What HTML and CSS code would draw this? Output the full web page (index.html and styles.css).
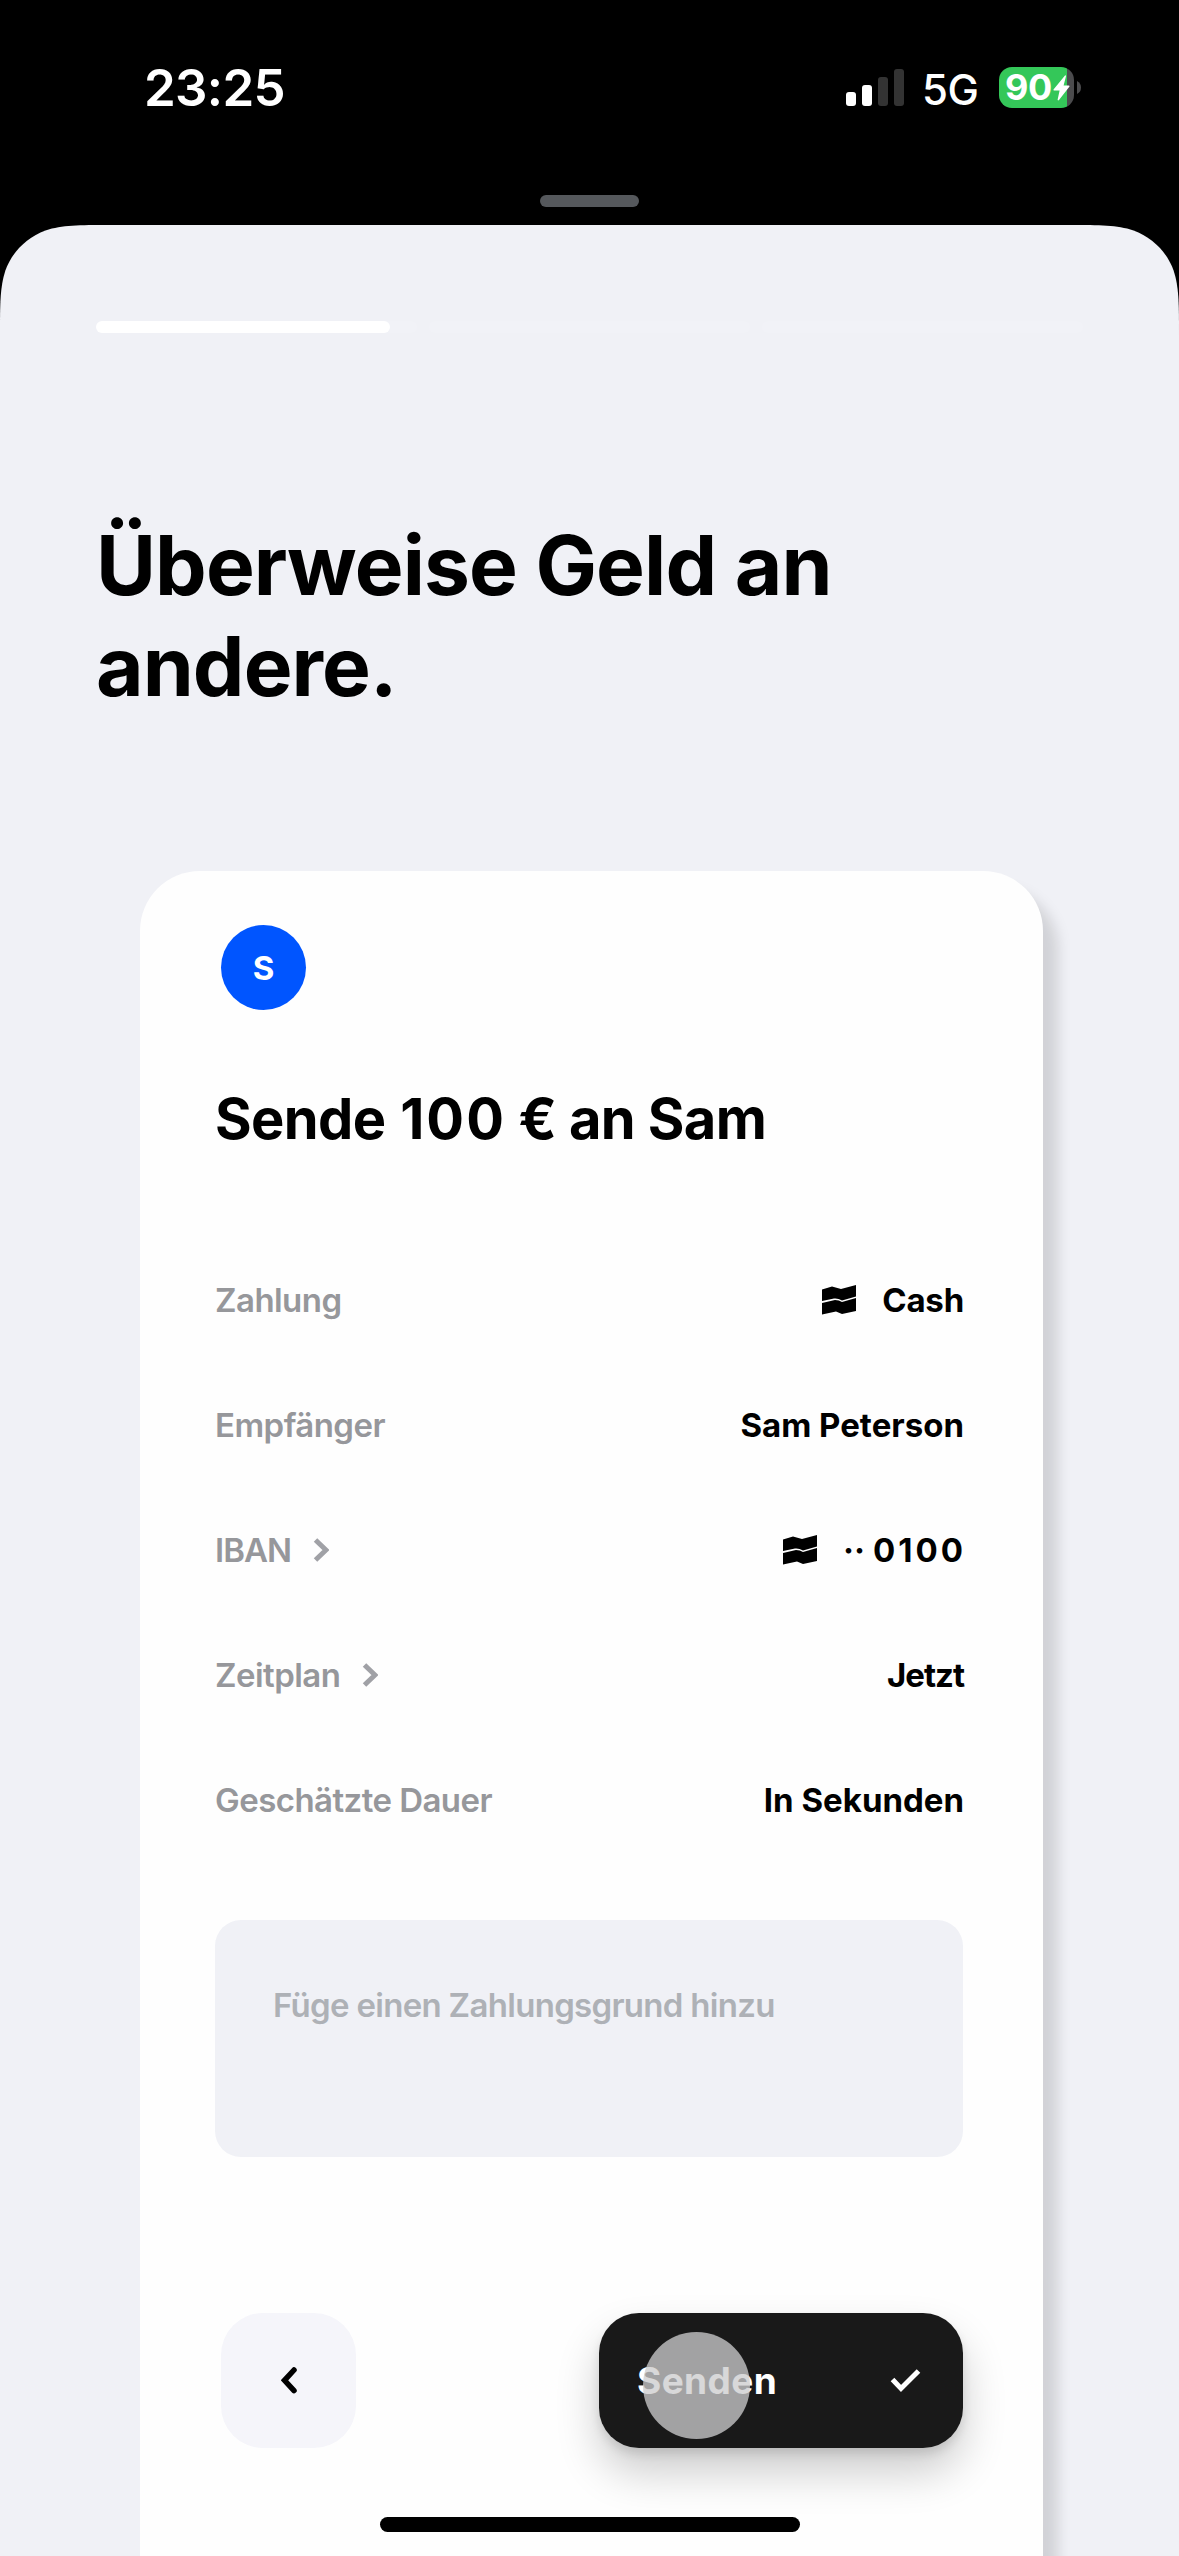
FILE: index.html
```html
<!DOCTYPE html>
<html lang="de">
<head>
<meta charset="utf-8">
<title>Geld überweisen</title>
<link rel="stylesheet" href="styles.css">
</head>
<body>
<div class="screen">
  <header class="status">
    <span class="time">23:25</span>
    <div class="indicators">
      <svg class="signal" width="58" height="37" viewBox="0 0 58 37">
        <rect x="0" y="23" width="10" height="14" rx="3" fill="#fff"/>
        <rect x="16" y="16" width="10" height="21" rx="3" fill="#fff"/>
        <rect x="32" y="8" width="10" height="29" rx="3" fill="#333"/>
        <rect x="48" y="0" width="10" height="37" rx="3" fill="#333"/>
      </svg>
      <span class="network">5G</span>
      <div class="battery">
        <div class="cell">
          <span class="level">90</span>
          <svg class="bolt" width="17" height="26" viewBox="0 0 17 26"><path d="M12 0.5 L0.5 14.5 Q0 15.6 1.2 15.6 H6.6 L4.6 24.8 Q5 26 6 25 L16.5 11.6 Q16.8 10.4 15.6 10.4 H10.6 L13 1.2 Q12.8 0 12 0.5Z" fill="#fff"/></svg>
        </div>
        <svg width="4" height="13" viewBox="0 0 4 13"><path d="M0 0 Q4 2 4 6.5 Q4 11 0 13Z" fill="#4b4b4d"/></svg>
      </div>
    </div>
  </header>
  <div class="grabber"></div>
  <main class="sheet">
    <div class="progress">
      <div class="step"><div class="done" style="width:294px"></div></div>
      <div class="step"></div>
      <div class="step"></div>
    </div>
    <h1>Überweise Geld an<br>andere.</h1>
    <section class="card">
      <div class="avatar">S</div>
      <h2>Sende <span class="amount">100</span> € an Sam</h2>
      <dl class="details">
        <div class="row">
          <dt>Zahlung</dt>
          <dd><svg class="flag" width="34" height="30" viewBox="0 0 34 30"><path d="M0 4.500 L10 1.500 L19 4 L34 0 V11.500 L20 15.500 Q16 13 12 13.500 L0 16Z M0 18 L13 15 Q17 15 20 17 L34 13 V26 L20 29 L14 26.500 L0 29.500Z"/></svg><span class="cash">Cash</span></dd>
        </div>
        <div class="row">
          <dt>Empfänger</dt>
          <dd>Sam Peterson</dd>
        </div>
        <div class="row">
          <dt class="iban">IBAN <svg class="chevron" width="16" height="24" viewBox="0 0 16 24"><path d="M2.500 2 L13 12 L2.500 22"/></svg></dt>
          <dd><svg class="flag" width="34" height="30" viewBox="0 0 34 30"><path d="M0 4.500 L10 1.500 L19 4 L34 0 V11.500 L20 15.500 Q16 13 12 13.500 L0 16Z M0 18 L13 15 Q17 15 20 17 L34 13 V26 L20 29 L14 26.500 L0 29.500Z"/></svg><span class="dots">··</span><span class="digits">0100</span></dd>
        </div>
        <div class="row">
          <dt>Zeitplan <svg class="chevron" width="16" height="24" viewBox="0 0 16 24"><path d="M2.500 2 L13 12 L2.500 22"/></svg></dt>
          <dd class="now">Jetzt</dd>
        </div>
        <div class="row">
          <dt>Geschätzte Dauer</dt>
          <dd>In Sekunden</dd>
        </div>
      </dl>
      <div class="reason">Füge einen Zahlungsgrund hinzu</div>
      <div class="actions">
        <div class="back"><svg width="16" height="27" viewBox="0 0 16 27"><path d="M13 3 L3.500 13.300 L13 23.600"/></svg></div>
        <div class="send">
          <span>Senden</span>
          <svg width="31" height="25" viewBox="0 0 31 25"><path d="M2.500 11.500 L11 20.500 L28.500 3"/></svg>
          <i class="touch"></i>
        </div>
      </div>
    </section>
  </main>
  <div class="home"></div>
</div>
</body>
</html>
```

FILE: styles.css
```css
* { box-sizing: border-box; }

body {
  margin: 0;
  background: #000;
  color: #000;
  font-family: Inter, "Liberation Sans", sans-serif;
}

.screen {
  position: relative;
  display: flex;
  flex-direction: column;
  width: 1179px;
  height: 2556px;
  overflow: hidden;
}

/* Status bar */
.status {
  display: flex;
  justify-content: space-between;
  flex: none;
  height: 195px;
  padding: 57px 98px 0 144px;
  color: #fff;
}

.time {
  height: 62px;
  line-height: 62px;
  font-size: 51px;
  font-weight: 600;
  letter-spacing: -0.7px;
}

.indicators {
  display: flex;
  align-items: center;
  height: 61px;
}

.signal { margin-right: 18px; }

.network {
  width: 77px;
  font-size: 42px;
  font-weight: 500;
  line-height: 61px;
  letter-spacing: -0.5px;
  padding-top: 3px;
}

.battery {
  display: flex;
  align-items: center;
  gap: 3px;
}

.cell {
  display: flex;
  align-items: center;
  width: 75px;
  height: 41px;
  padding-left: 6px;
  border-radius: 13px;
  background: linear-gradient(90deg, #34c759 68px, #4b4b4d 68px);
}

.level {
  width: 48px;
  font-size: 36px;
  font-weight: 700;
  line-height: 41px;
  letter-spacing: -0.5px;
}

.grabber {
  flex: none;
  align-self: center;
  width: 99px;
  height: 12px;
  margin-bottom: 18px;
  border-radius: 6px;
  background: #55585c;
}

/* Sheet */
.sheet {
  flex: none;
  height: 2331px;
  padding-top: 96px;
  background: #f0f1f6;
  clip-path: path("M0 110 C0 78.400 0 62.500 5.400 45.500 C12.200 26.800 26.800 12.200 45.500 5.400 C62.500 0 78.400 0 110 0 H1069 C1100.600 0 1116.500 0 1133.500 5.400 C1152.200 12.200 1166.800 26.800 1173.600 45.500 C1179 62.500 1179 78.400 1179 110 V2331 H0 Z");
}

.progress {
  display: grid;
  grid-template-columns: repeat(3, 1fr);
  gap: 12px;
  margin: 0 96px;
}

.step {
  height: 12px;
  border-radius: 6px;
  background: #f1f2f7;
}

.done {
  height: 12px;
  border-radius: 6px;
  background: #fff;
}

h1 {
  margin: 182px 0 154px 96px;
  font-size: 82px;
  font-weight: 700;
  line-height: 101px;
  letter-spacing: -0.9px;
}

/* Transfer card */
.card {
  width: 903px;
  height: 1760px;
  margin-left: 140px;
  padding: 54px 80px 0 75px;
  border-radius: 60px 60px 0 0;
  background: #fefefe;
  box-shadow: 15px 18px 14px rgba(0, 0, 0, 0.13);
}

.avatar {
  width: 85px;
  height: 85px;
  margin-left: 6px;
  border-radius: 50%;
  background: #0055ff;
  color: #fff;
  font-size: 33px;
  font-weight: 700;
  line-height: 86px;
  text-align: center;
}

h2 {
  margin: 75px 0 84px;
  font-size: 56px;
  font-weight: 700;
  line-height: 68px;
  letter-spacing: -0.6px;
  white-space: nowrap;
}

.amount {
  margin-left: 2px;
  letter-spacing: 2px;
}

.details { margin: 0 -1px 0 0; }

.row {
  display: flex;
  justify-content: space-between;
  align-items: center;
  height: 125px;
  font-size: 33px;
  line-height: 40px;
}

dt {
  display: flex;
  align-items: center;
  color: #96979b;
  font-weight: 600;
  letter-spacing: -0.55px;
}

dd {
  display: flex;
  align-items: center;
  margin: 0;
  font-weight: 700;
}

.iban { letter-spacing: -1px; }

.flag { fill: #000; }

.cash {
  margin-left: 26px;
  letter-spacing: -0.2px;
}

.dots { margin-left: 26px; }

.digits {
  margin: 0 -2px 0 8px;
  letter-spacing: 3px;
}

.now { letter-spacing: -1px; }

.chevron {
  margin-left: 22px;
  fill: none;
  stroke: #a0a1a6;
  stroke-width: 5;
}

.reason {
  height: 237px;
  margin-top: 58px;
  padding: 65px 58px;
  border-radius: 26px;
  background: #f0f1f6;
  color: #aeb1b6;
  font-size: 33px;
  font-weight: 600;
  line-height: 40px;
  letter-spacing: -0.7px;
  white-space: nowrap;
}

.actions {
  display: flex;
  justify-content: space-between;
  margin: 156px 0 0 6px;
}

.back {
  display: flex;
  align-items: center;
  justify-content: center;
  width: 135px;
  height: 135px;
  border-radius: 42px;
  background: #f5f5fa;
}

.back path {
  fill: none;
  stroke: #000;
  stroke-width: 5.500;
  stroke-linecap: round;
}

.send {
  position: relative;
  display: flex;
  align-items: center;
  justify-content: space-between;
  width: 364px;
  height: 135px;
  padding: 0 42px 0 38px;
  border-radius: 40px;
  background: #191919;
  box-shadow: 0 24px 44px rgba(0, 0, 0, 0.2), 0 6px 10px rgba(0, 0, 0, 0.1);
  color: #fff;
  font-size: 37px;
  font-weight: 700;
  letter-spacing: 0.4px;
}

.send path {
  fill: none;
  stroke: #fff;
  stroke-width: 5;
}

/* Finger position over the send button */
.touch {
  position: absolute;
  left: 44px;
  top: 19px;
  width: 107px;
  height: 107px;
  border-radius: 50%;
  background: rgba(204, 204, 206, 0.77);
}

.home {
  position: absolute;
  left: 380px;
  bottom: 24px;
  width: 420px;
  height: 15px;
  border-radius: 8px;
  background: #000;
}
```
